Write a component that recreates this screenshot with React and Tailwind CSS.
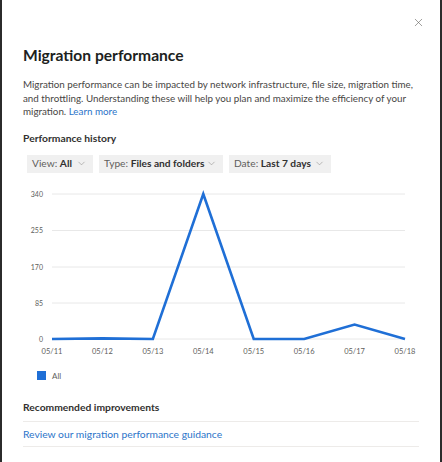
import { X, ChevronDown } from "lucide-react";

const Y_TICKS = [
  { label: "340", y: 195 },
  { label: "255", y: 231.5 },
  { label: "170", y: 268 },
  { label: "85", y: 304 },
  { label: "0", y: 340 },
];

const DAYS = ["05/11", "05/12", "05/13", "05/14", "05/15", "05/16", "05/17", "05/18"];
const VALUES = [0, 1.5, 0, 340, 0, 0, 34, 0];

const X0 = 52;
const X1 = 405;

function Dropdown({ label, value, width }) {
  return (
    <button
      className={`h-[18px] pl-[5px] pr-[6px] flex items-center justify-between whitespace-nowrap bg-[#f0f0f0] text-[10.2px] leading-none text-[#605e5c] ${width}`}
    >
      <span>
        {label}: <span className="font-bold text-[#323130]">{value}</span>
      </span>
      <ChevronDown size={11} strokeWidth={1.2} className="text-[#8a8886]" />
    </button>
  );
}

function Chart() {
  const step = (X1 - X0) / (DAYS.length - 1);
  const pts = VALUES.map((v, i) => {
    const x = X0 + i * step;
    const y = 340 - (v / 340) * 145;
    return `${x},${y}`;
  }).join(" ");

  return (
    <svg width="442" height="176" viewBox="0 184 442 176" className="block">
      {Y_TICKS.map((t) => (
        <g key={t.label}>
          <line x1={X0} x2={X1} y1={t.y} y2={t.y} stroke="#e8e8e8" strokeWidth="1" />
          <text x="43" y={t.y + 2.5} textAnchor="end" fontSize="7" fill="#605e5c">
            {t.label}
          </text>
        </g>
      ))}
      {DAYS.map((d, i) => (
        <text key={d} x={X0 + i * step} y="355" textAnchor="middle" fontSize="7.5" fill="#605e5c">
          {d}
        </text>
      ))}
      <polyline points={pts} fill="none" stroke="#1f6fd6" strokeWidth="2.6" strokeLinejoin="miter" />
    </svg>
  );
}

export default function App() {
  return (
    <div
      className="w-[442px] h-[462px] bg-white border-x-2 border-[#2b2b2b] overflow-hidden relative"
      style={{ fontFamily: "Lato, 'Noto Sans', sans-serif" }}
    >
      <button className="absolute right-[15px] top-[16px] text-[#605e5c]" aria-label="Close">
        <X size={13} strokeWidth={1.1} />
      </button>

      <div className="px-[21px]">
        <h1 className="pt-[45px] text-[15.6px] font-bold leading-[20px] text-[#201f1e]">
          Migration performance
        </h1>
        <p className="mt-[13px] text-[9.8px] leading-[13.5px] text-[#484644] whitespace-nowrap">
          Migration performance can be impacted by network infrastructure, file size, migration time,
          <br />
          and throttling. Understanding these will help you plan and maximize the efficiency of your
          <br />
          migration. <a href="#" className="text-[#2b74c9]">Learn more</a>
        </p>

        <h2 className="mt-[12px] text-[10.3px] font-bold leading-[14px] text-[#323130]">
          Performance history
        </h2>
        <div className="mt-[10px] ml-[4px] flex gap-[6px]">
          <Dropdown label="View" value="All" width="w-[66px]" />
          <Dropdown label="Type" value="Files and folders" width="w-[124px]" />
          <Dropdown label="Date" value="Last 7 days" width="w-[102px]" />
        </div>
      </div>

      <div className="-mx-[2px] mt-[10px]">
        <Chart />
      </div>

      <div className="px-[21px]">
        <div className="ml-[14px] mt-[11px] flex items-center gap-[6px]">
          <span className="w-[9px] h-[9px] bg-[#1f6fd6]" />
          <span className="text-[8px] text-[#605e5c]">All</span>
        </div>

        <h2 className="mt-[18px] text-[10.3px] font-bold leading-[14px] text-[#323130]">
          Recommended improvements
        </h2>
        <div className="mt-[7px] border-t border-[#edebe9]" />
        <a href="#" className="block py-[5px] text-[10.3px] leading-[14px] text-[#2b74c9]">
          Review our migration performance guidance
        </a>
        <div className="border-t border-[#edebe9]" />
      </div>
    </div>
  );
}
